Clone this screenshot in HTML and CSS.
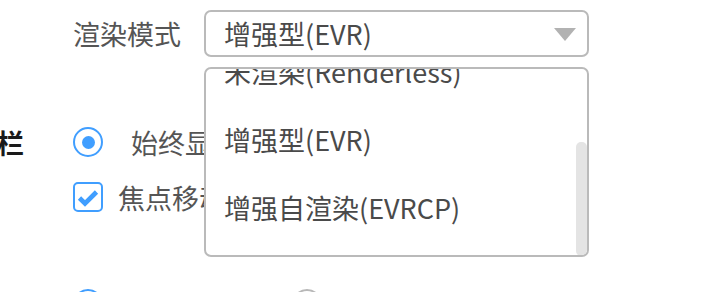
FILE: index.html
```html
<!DOCTYPE html>
<html lang="zh-CN">
<head>
<meta charset="utf-8">
<link rel="stylesheet" href="styles.css">
</head>
<body>
<div class="page">
  <div class="row-mode">
    <span class="label">渲染模式</span>
    <div class="select">
      <span class="select-value">增强型(EVR)</span>
      <span class="caret"></span>
    </div>
  </div>

  <div class="section">
    <div class="section-title">栏</div>
    <div class="options">
      <div class="option radio-row">
        <span class="radio checked"></span>
        <span class="opt-text">始终显示</span>
      </div>
      <div class="option check-row">
        <span class="checkbox">
          <svg viewBox="0 0 30 30" width="30" height="30"><path d="M6.5 16 L12 21.5 L23.5 10" fill="none" stroke="#409eff" stroke-width="4.6" stroke-linejoin="miter"/></svg>
        </span>
        <span class="opt-text">焦点移动时显示</span>
      </div>
    </div>
  </div>

  <div class="bottom-row">
    <span class="radio checked"></span>
    <span class="radio"></span>
  </div>

  <div class="dropdown">
    <ul class="dropdown-list">
      <li>未渲染(Renderless)</li>
      <li>增强型(EVR)</li>
      <li>增强自渲染(EVRCP)</li>
    </ul>
    <span class="scrollbar"></span>
  </div>
</div>
</body>
</html>
```

FILE: styles.css
```css
html, body {
  margin: 0;
  padding: 0;
  background: #fff;
}
body {
  width: 721px;
  height: 292px;
  overflow: hidden;
  font-family: "Noto Sans CJK SC", "Noto Sans", sans-serif;
  color: #555;
}
.page {
  position: relative;
  width: 721px;
  height: 292px;
  overflow: hidden;
}
.row-mode {
  display: flex;
  align-items: center;
  padding-left: 73px;
  margin-top: 10px;
  height: 47px;
}
.label {
  width: 131px;
  font-size: 27px;
  line-height: 1;
  color: #555;
}
.select {
  box-sizing: border-box;
  width: 385px;
  height: 47px;
  border: 2px solid #bababa;
  border-radius: 7px;
  display: flex;
  align-items: center;
  justify-content: space-between;
  padding: 0 11px 0 18px;
}
.select-value {
  font-size: 27px;
  line-height: 1;
  color: #4a4a4a;
}
.caret {
  width: 0;
  height: 0;
  border-left: 11.5px solid transparent;
  border-right: 11.5px solid transparent;
  border-top: 13px solid #b2b2b2;
  margin-top: 2px;
}
.section {
  display: flex;
  margin-top: 65px;
}
.section-title {
  width: 76px;
  margin-left: -3px;
  height: 40px;
  display: flex;
  align-items: center;
  font-size: 27px;
  font-weight: 700;
  color: #1a1a1a;
  line-height: 1;
}
.options {
  display: flex;
  flex-direction: column;
  gap: 15px;
}
.option {
  display: flex;
  align-items: center;
  height: 40px;
}
.radio-row .opt-text { margin-left: 28px; }
.check-row .opt-text { margin-left: 15px; }
.opt-text {
  font-size: 27px;
  line-height: 1;
  color: #555;
  white-space: nowrap;
}
.radio {
  box-sizing: border-box;
  width: 30px;
  height: 30px;
  border-radius: 50%;
  border: 2px solid #b8b8b8;
  display: flex;
  align-items: center;
  justify-content: center;
  flex: none;
}
.radio.checked {
  border-color: #409eff;
}
.radio.checked::after {
  content: "";
  width: 13px;
  height: 13px;
  border-radius: 50%;
  background: #409eff;
}
.checkbox {
  box-sizing: border-box;
  width: 30px;
  height: 30px;
  border: 2px solid #409eff;
  border-radius: 5px;
  position: relative;
  flex: none;
}
.checkbox svg {
  position: absolute;
  left: -2px;
  top: -2px;
}
.bottom-row {
  display: flex;
  padding-left: 73px;
  margin-top: 72px;
  gap: 189px;
}
.dropdown {
  position: absolute;
  left: 204px;
  top: 67px;
  width: 385px;
  height: 190px;
  box-sizing: border-box;
  border: 2px solid #bababa;
  border-radius: 7px;
  background: #fff;
  overflow: hidden;
}
.dropdown-list {
  list-style: none;
  margin: -32px 0 0 0;
  padding: 0;
}
.dropdown-list li {
  height: 68px;
  display: flex;
  align-items: center;
  padding-left: 18px;
  font-size: 27px;
  line-height: 1;
  color: #4a4a4a;
  white-space: nowrap;
}
.scrollbar {
  position: absolute;
  right: 0;
  top: 73px;
  width: 11px;
  height: 114px;
  border-radius: 5px;
  background: #e4e4e4;
}
```
